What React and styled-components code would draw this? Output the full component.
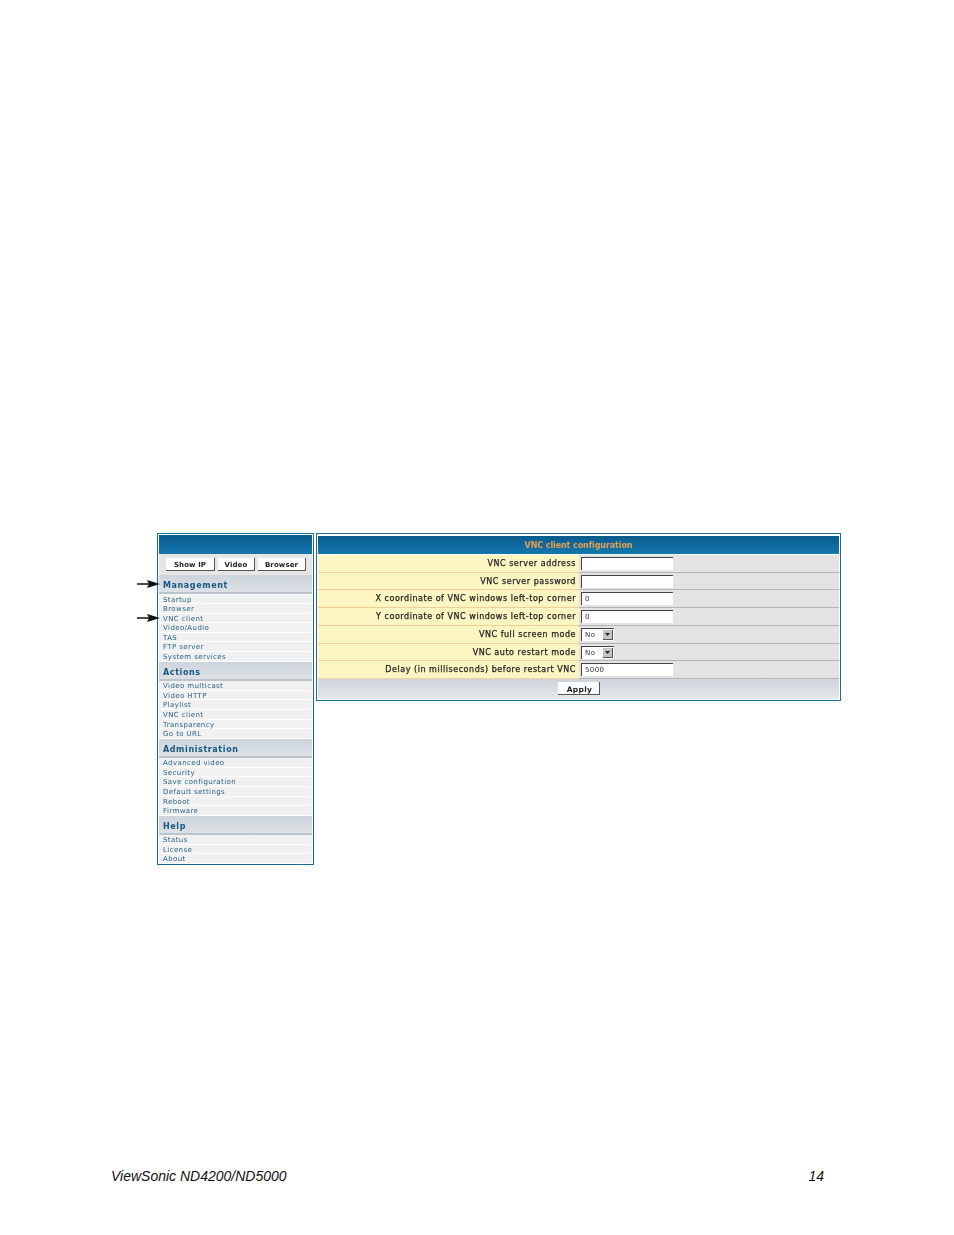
import styled, { createGlobalStyle } from "styled-components";

const GlobalStyle = createGlobalStyle`
  html, body {
    margin: 0;
    padding: 0;
    background: #fff;
  }
`;

const menu = [
  {
    title: "Management",
    items: ["Startup", "Browser", "VNC client", "Video/Audio", "TAS", "FTP server", "System services"],
  },
  {
    title: "Actions",
    items: ["Video multicast", "Video HTTP", "Playlist", "VNC client", "Transparency", "Go to URL"],
  },
  {
    title: "Administration",
    items: ["Advanced video", "Security", "Save configuration", "Default settings", "Reboot", "Firmware"],
  },
  { title: "Help", items: ["Status", "License", "About"] },
];

const rows = [
  { label: "VNC server address", value: "" },
  { label: "VNC server password", value: "" },
  { label: "X coordinate of VNC windows left-top corner", value: "0" },
  { label: "Y coordinate of VNC windows left-top corner", value: "0" },
  { label: "VNC full screen mode", select: "No" },
  { label: "VNC auto restart mode", select: "No" },
  { label: "Delay (in milliseconds) before restart VNC", value: "5000" },
];

const Arrow = ({ top }) => (
  <ArrowMark $top={top} width="24" height="10" viewBox="0 0 24 10">
    <path d="M0 5H12" stroke="#111" strokeWidth="1.5" />
    <path d="M10 1L23 5L10 9L12 5Z" fill="#111" />
  </ArrowMark>
);

const App = () => {
  return (
    <Page>
      <GlobalStyle />
      <Shots>
        <Sidebar>
          <Arrow top={45} />
          <Arrow top={79} />
          <Banner />
          <Buttons>
            <TopButton $width={49}>Show IP</TopButton>
            <TopButton $width={37}>Video</TopButton>
            <TopButton $width={48}>Browser</TopButton>
          </Buttons>
          {menu.map((section) => (
            <section key={section.title}>
              <SectionHead>{section.title}</SectionHead>
              <SectionList>
                {section.items.map((item) => (
                  <SectionItem key={item}>{item}</SectionItem>
                ))}
              </SectionList>
            </section>
          ))}
        </Sidebar>
        <Main>
          <TitleBar>VNC client configuration</TitleBar>
          {rows.map((row) => (
            <Row key={row.label}>
              <Label>{row.label}</Label>
              <Field>
                {row.select ? (
                  <Select>
                    <span>{row.select}</span>
                    <SelectArrow>
                      <svg width="7" height="5" viewBox="0 0 7 5">
                        <path d="M1 1H6L3.5 4Z" fill="#222" />
                      </svg>
                    </SelectArrow>
                  </Select>
                ) : (
                  <TextBox>{row.value}</TextBox>
                )}
              </Field>
            </Row>
          ))}
          <ApplyRow>
            <ApplyButton>Apply</ApplyButton>
          </ApplyRow>
        </Main>
      </Shots>
      <Footer>
        <span>ViewSonic ND4200/ND5000</span>
        <span>14</span>
      </Footer>
    </Page>
  );
};

export default App;

const Page = styled.div`
  box-sizing: border-box;
  width: 954px;
  height: 1235px;
  padding: 533px 130px 51px 111px;
  display: flex;
  flex-direction: column;
  justify-content: space-between;
`;

const Shots = styled.div`
  display: flex;
  align-items: flex-start;
  gap: 2px;
  margin-left: 46px;
  margin-right: -17px;
  font-family: "DejaVu Sans", sans-serif;
  filter: blur(0.25px);
`;

const Sidebar = styled.div`
  position: relative;
  box-sizing: border-box;
  width: 157px;
  height: 332px;
  padding: 1px;
  border: 1px solid #1d6a94;
  background: #fff;
`;

const ArrowMark = styled.svg`
  position: absolute;
  left: -21px;
  top: ${(p) => p.$top}px;
`;

const Banner = styled.div`
  height: 19px;
  background: linear-gradient(#0a5a8c, #1478ad);
`;

const Buttons = styled.div`
  box-sizing: border-box;
  height: 21px;
  padding: 4px 6px 0 7px;
  display: flex;
  justify-content: space-between;
  background: #e6e6e6;
`;

const TopButton = styled.div`
  box-sizing: border-box;
  width: ${(p) => p.$width}px;
  height: 13px;
  background: #fff;
  border-right: 1px solid #555;
  border-bottom: 1px solid #555;
  font-size: 7px;
  font-weight: 700;
  line-height: 15px;
  letter-spacing: 0.1px;
  text-align: center;
  color: #222;
`;

const SectionHead = styled.div`
  box-sizing: border-box;
  height: 19px;
  padding-left: 4px;
  background: linear-gradient(#ccd4dc, #dde1e6 88%, #b9c4ce 88%, #b9c4ce);
  font-size: 8px;
  font-weight: 700;
  line-height: 22px;
  letter-spacing: 0.6px;
  color: #14577f;
`;

const SectionList = styled.div`
  padding: 0.5px 0 0;
`;

const SectionItem = styled.div`
  box-sizing: border-box;
  height: 9.6px;
  padding-left: 4px;
  background: #f1f1f1;
  border-bottom: 1px solid #fff;
  font-size: 7px;
  line-height: 11.5px;
  letter-spacing: 0.4px;
  color: #2a6588;
  white-space: nowrap;
`;

const Main = styled.div`
  box-sizing: border-box;
  width: 525px;
  height: 168px;
  padding: 2px 1px 1px;
  border: 1px solid #1d6a94;
  background: #fff;
`;

const TitleBar = styled.div`
  height: 18px;
  margin-bottom: 1px;
  background: linear-gradient(#0a5a8c, #1478ad);
  font-size: 8px;
  font-weight: 700;
  line-height: 19px;
  letter-spacing: -0.1px;
  text-align: center;
  color: #e8a050;
`;

const Row = styled.div`
  display: flex;
  height: 17.72px;
`;

const Label = styled.div`
  box-sizing: border-box;
  width: 261px;
  padding-right: 3px;
  background: #fdf6c2;
  border-bottom: 1px solid #f3cf95;
  font-size: 8px;
  line-height: 18.5px;
  letter-spacing: 0.54px;
  text-align: right;
  color: #222;
  -webkit-text-stroke: 0.25px #222;
  white-space: nowrap;
`;

const Field = styled.div`
  box-sizing: border-box;
  flex: 1;
  padding: 2px 0 0 2px;
  background: #e3e3e3;
  border-bottom: 1px solid #b4b4b4;
`;

const TextBox = styled.div`
  box-sizing: border-box;
  width: 92px;
  height: 13px;
  padding-left: 3px;
  background: #fff;
  border-top: 1px solid #444;
  border-left: 1px solid #444;
  font-size: 7px;
  line-height: 12px;
  letter-spacing: 0.4px;
  color: #333;
`;

const Select = styled.div`
  box-sizing: border-box;
  display: flex;
  justify-content: space-between;
  width: 33px;
  height: 13px;
  padding: 1px 1px 0 3px;
  background: #fff;
  border-top: 1px solid #444;
  border-left: 1px solid #444;
  font-size: 7px;
  line-height: 11px;
  letter-spacing: 0.4px;
  color: #333;
`;

const SelectArrow = styled.div`
  box-sizing: border-box;
  width: 10px;
  height: 10px;
  display: flex;
  align-items: center;
  justify-content: center;
  background: #c4c4c0;
  border-right: 1px solid #555;
  border-bottom: 1px solid #555;
`;

const ApplyRow = styled.div`
  height: 20px;
  padding-top: 3px;
  box-sizing: border-box;
  display: flex;
  justify-content: center;
  background: linear-gradient(#ccd4dc, #e6e9ec);
`;

const ApplyButton = styled.div`
  box-sizing: border-box;
  width: 42px;
  height: 13px;
  padding-left: 3px;
  background: #fff;
  border-right: 1px solid #555;
  border-bottom: 1px solid #555;
  font-size: 7.5px;
  font-weight: 700;
  line-height: 15px;
  letter-spacing: 0.3px;
  text-align: center;
  color: #222;
`;

const Footer = styled.div`
  display: flex;
  justify-content: space-between;
  font-family: "Liberation Sans", Arial, sans-serif;
  font-size: 14px;
  font-style: italic;
  line-height: 16px;
  color: #111;
`;
